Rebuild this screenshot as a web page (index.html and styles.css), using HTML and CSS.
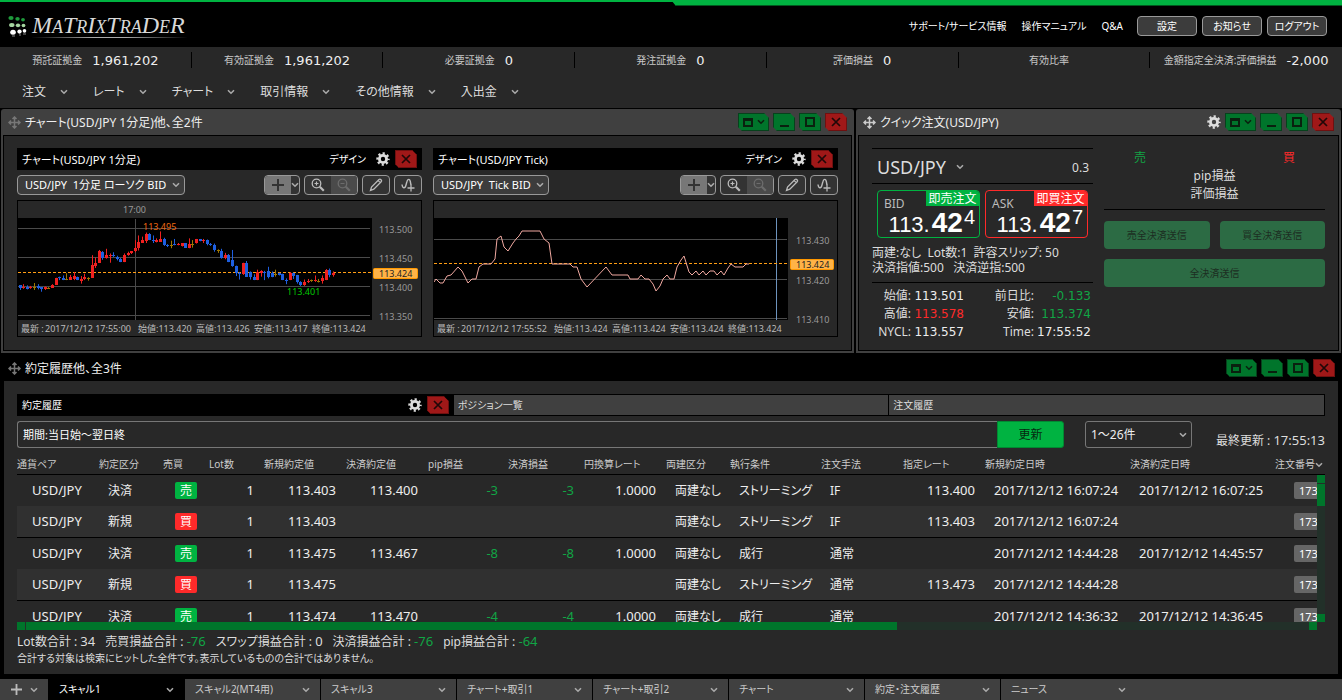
FILE: index.html
```html
<!DOCTYPE html>
<html lang="ja">
<head>
    <meta charset="UTF-8">
    <meta name="viewport" content="width=device-width, initial-scale=1.0">
    <title>MATRIX TRADER</title>
    <link rel="stylesheet" href="styles.css">
</head>
<body>
    <!-- icons -->
    <svg class="sprite" aria-hidden="true">
        <symbol id="i-chev" viewBox="0 0 8 6"><path d="M1 1.2l3 3 3-3" fill="none" stroke="currentColor" stroke-width="1.6"/></symbol>
        <symbol id="i-gear" viewBox="0 0 14 14"><circle cx="7" cy="7" r="3.6" fill="none" stroke="currentColor" stroke-width="2.8"/><circle cx="7" cy="7" r="5.6" fill="none" stroke="currentColor" stroke-width="2.2" stroke-dasharray="2.2 2.2" stroke-dashoffset="1.1"/></symbol>
        <symbol id="i-move" viewBox="0 0 13 13"><path d="M6.5 1v11M1 6.5h11M4.5 3l2-2 2 2M4.5 10l2 2 2-2M3 4.500l-2 2 2 2M10 4.500l2 2-2 2" fill="none" stroke="currentColor" stroke-width="1.5"/></symbol>
        <symbol id="i-close" viewBox="0 0 12 12"><path d="M2 2l8 8M10 2l-8 8" fill="none" stroke="currentColor" stroke-width="1.7"/></symbol>
        <symbol id="i-min" viewBox="0 0 12 12"><path d="M2 10h9" fill="none" stroke="currentColor" stroke-width="2"/></symbol>
        <symbol id="i-max" viewBox="0 0 12 12"><rect x="2" y="2" width="8" height="8" fill="none" stroke="currentColor" stroke-width="2"/></symbol>
        <symbol id="i-win" viewBox="0 0 12 12"><path d="M2 3h8v7H2zM2 4h8" fill="none" stroke="currentColor" stroke-width="2"/></symbol>
        <symbol id="i-plus" viewBox="0 0 12 12"><path d="M6 0v12M0 6h12" fill="none" stroke="currentColor" stroke-width="2"/></symbol>
        <symbol id="i-zoomin" viewBox="0 0 14 14"><circle cx="5.500" cy="5.500" r="4.300" fill="none" stroke="currentColor" stroke-width="1.300"/><path d="M3.500 5.500h4M5.500 3.500v4" stroke="currentColor" stroke-width="1.200"/><path d="M8.800 8.800l4 4" stroke="currentColor" stroke-width="2.200"/></symbol>
        <symbol id="i-zoomout" viewBox="0 0 14 14"><circle cx="5.500" cy="5.500" r="4.300" fill="none" stroke="currentColor" stroke-width="1.300"/><path d="M3.500 5.500h4" stroke="currentColor" stroke-width="1.200"/><path d="M8.800 8.800l4 4" stroke="currentColor" stroke-width="2.200"/></symbol>
        <symbol id="i-pen" viewBox="0 0 14 14"><path d="M1.500 12.500l1-3.500 7.500-7.500q1-.8 2 .2t.2 2L4.800 11.200zM9.200 2.600l2.300 2.300" fill="none" stroke="currentColor" stroke-width="1.300"/></symbol>
        <symbol id="i-wave" viewBox="0 0 14 14"><path d="M1 6.500c.5 4 3 4.500 4 .5l.8-3c.8-3.500 3-3.500 3.600 0l.6 3" fill="none" stroke="currentColor" stroke-width="1.400"/><path d="M10 6.500v7M6.500 10h7" stroke="currentColor" stroke-width="1.300"/></symbol>
    </svg>

    <header class="header">
        <div class="logo">
            <svg class="logo-mark" viewBox="0 0 20 22">
                <g fill="#1f9a3c"><ellipse cx="3" cy="3" rx="2.600" ry="2"/><ellipse cx="9.500" cy="3.800" rx="2.200" ry="1.900"/><ellipse cx="15" cy="4.800" rx="1.900" ry="1.700"/></g>
                <g fill="#a5d6a0"><ellipse cx="3.800" cy="10" rx="2.700" ry="2.100"/><ellipse cx="10" cy="10.300" rx="2.200" ry="1.900"/><ellipse cx="15.500" cy="10.500" rx="1.900" ry="1.800"/></g>
                <g fill="#fff"><ellipse cx="5" cy="17.300" rx="2.800" ry="2.500"/><ellipse cx="11.500" cy="16.600" rx="2.200" ry="2.100"/><ellipse cx="16.500" cy="15.800" rx="1.800" ry="1.900"/></g>
                <path d="M4 21h3M11 20h2M15 19h3" stroke="#888"/>
            </svg>
            <span class="logo-text"><b>M</b>A<b>T</b>R<b>I</b>X<b>T</b>RA<b>D</b>E<b>R</b></span>
        </div>
        <nav class="header-nav">
            <a href="#">サポート/サービス情報</a>
            <a href="#">操作マニュアル</a>
            <a href="#">Q&amp;A</a>
        </nav>
        <div class="header-buttons">
            <button>設定</button>
            <button>お知らせ</button>
            <button>ログアウト</button>
        </div>
    </header>

    <div class="stats">
        <div class="stat">預託証拠金<span>1,961,202</span></div>
        <div class="stat">有効証拠金<span>1,961,202</span></div>
        <div class="stat">必要証拠金<span>0</span></div>
        <div class="stat">発注証拠金<span>0</span></div>
        <div class="stat">評価損益<span>0</span></div>
        <div class="stat">有効比率<span></span></div>
        <div class="stat">金額指定全決済:評価損益<span>-2,000</span></div>
    </div>

    <nav class="menu">
        <a href="#">注文<svg class="chev"><use href="#i-chev"/></svg></a>
        <a href="#">レート<svg class="chev"><use href="#i-chev"/></svg></a>
        <a href="#">チャート<svg class="chev"><use href="#i-chev"/></svg></a>
        <a href="#">取引情報<svg class="chev"><use href="#i-chev"/></svg></a>
        <a href="#">その他情報<svg class="chev"><use href="#i-chev"/></svg></a>
        <a href="#">入出金<svg class="chev"><use href="#i-chev"/></svg></a>
    </nav>

    <main class="workspace">
        <div class="top-row">
            <section class="panel">
                <div class="panel-title">
                    <svg class="move dim"><use href="#i-move"/></svg>
                    <h2>チャート(USD/JPY 1分足)他、全2件</h2>
                    <div class="win-buttons">
                        <button class="win wide" aria-label="レイアウト"><svg><use href="#i-win"/></svg><svg class="chev"><use href="#i-chev"/></svg></button>
                        <button class="win" aria-label="最小化"><svg><use href="#i-min"/></svg></button>
                        <button class="win" aria-label="最大化"><svg><use href="#i-max"/></svg></button>
                        <button class="win close" aria-label="閉じる"><svg><use href="#i-close"/></svg></button>
                    </div>
                </div>
                <div class="panel-body charts">
                    <div class="chart">
                        <div class="chart-title">
                            <h3>チャート(USD/JPY 1分足)</h3>
                            <span>デザイン</span>
                            <svg class="gear"><use href="#i-gear"/></svg>
                            <button class="win close" aria-label="閉じる"><svg><use href="#i-close"/></svg></button>
                        </div>
                        <div class="chart-tools">
                            <select class="select-sm" aria-label="チャート種別"><option>USD/JPY&nbsp; 1分足 ローソク BID</option></select>
                            <div class="tool-group">
                                <button class="add" aria-label="追加"><svg><use href="#i-plus"/></svg></button>
                                <button class="drop" aria-label="追加メニュー"><svg class="chev"><use href="#i-chev"/></svg></button>
                            </div>
                            <div class="tool-group">
                                <button aria-label="拡大"><svg><use href="#i-zoomin"/></svg></button>
                                <button aria-label="縮小" disabled><svg><use href="#i-zoomout"/></svg></button>
                            </div>
                            <div class="tool-group"><button aria-label="描画"><svg><use href="#i-pen"/></svg></button></div>
                            <div class="tool-group"><button aria-label="テクニカル"><svg><use href="#i-wave"/></svg></button></div>
                        </div>
                        <div class="chart-box">
                            <svg viewBox="0 0 403 135">
                                <rect x="0" y="17" width="354" height="102" fill="#000"/>
                                <path class="grid" d="M0 27.500h352M0 56.500h352M0 85.500h352M0 114.500h352M117.500 18v101"/>
                                <path class="now" d="M0 71.500h355"/>
                                <g id="candles"></g>
                                <text x="105" y="12">17:00</text>
                                <text class="high" x="125" y="29">113.495</text>
                                <text class="low" x="269" y="94">113.401</text>
                                <text x="361" y="32">113.500</text>
                                <text x="361" y="61">113.450</text>
                                <text x="361" y="90">113.400</text>
                                <text x="361" y="119">113.350</text>
                                <rect class="tag" x="355.500" y="67.500" width="44" height="10" rx="1"/>
                                <text class="tag-text" x="361" y="76">113.424</text>
                                <g class="legend">
                                    <text x="3" y="131">最新 :</text>
                                    <text x="27" y="131">2017/12/12 17:55:00</text>
                                    <text x="120" y="131">始値:113.420</text>
                                    <text x="178" y="131">高値:113.426</text>
                                    <text x="236" y="131">安値:113.417</text>
                                    <text x="294" y="131">終値:113.424</text>
                                </g>
                            </svg>
                        </div>
                    </div>

                    <div class="chart">
                        <div class="chart-title">
                            <h3>チャート(USD/JPY Tick)</h3>
                            <span>デザイン</span>
                            <svg class="gear"><use href="#i-gear"/></svg>
                            <button class="win close" aria-label="閉じる"><svg><use href="#i-close"/></svg></button>
                        </div>
                        <div class="chart-tools">
                            <select class="select-sm" aria-label="チャート種別"><option>USD/JPY&nbsp; Tick BID</option></select>
                            <div class="tool-group">
                                <button class="add" aria-label="追加"><svg><use href="#i-plus"/></svg></button>
                                <button class="drop" aria-label="追加メニュー"><svg class="chev"><use href="#i-chev"/></svg></button>
                            </div>
                            <div class="tool-group">
                                <button aria-label="拡大"><svg><use href="#i-zoomin"/></svg></button>
                                <button aria-label="縮小" disabled><svg><use href="#i-zoomout"/></svg></button>
                            </div>
                            <div class="tool-group"><button aria-label="描画"><svg><use href="#i-pen"/></svg></button></div>
                            <div class="tool-group"><button aria-label="テクニカル"><svg><use href="#i-wave"/></svg></button></div>
                        </div>
                        <div class="chart-box">
                            <svg viewBox="0 0 403 135">
                                <rect x="0" y="17" width="354" height="102" fill="#000"/>
                                <path class="grid" d="M0 38.500h353M0 78.500h353M0 117.500h353"/>
                                <path class="cursor" d="M342.500 17v102"/>
                                <path class="now" d="M0 62.500h355"/>
                                <polyline class="tick" points="0,81 2,78 6,82 9,82 13,75 17,74 24,66 28,70 34,82 38,78 42,78 45,66 49,63 57,63 61,58 63,38 67,35 70,46 74,50 79,42 82,38 85,35 88,30 106,30 110,38 115,42 118,63 136,63 139,66 143,66 147,78 150,82 153,86 172,66 178,74 194,74 196,78 204,78 207,74 211,78 215,78 219,83 222,90 226,85 229,78 233,74 236,78 240,78 243,66 247,59 250,55 255,71 258,74 262,70 265,74 269,70 272,74 276,70 280,70 283,74 287,70 290,74 294,67 297,63 301,66 309,66 312,63 315,63"/>
                                <text x="362" y="43">113.430</text>
                                <text x="362" y="83">113.420</text>
                                <text x="362" y="122">113.410</text>
                                <rect class="tag" x="356.500" y="58.500" width="43" height="10" rx="1"/>
                                <text class="tag-text" x="362" y="67">113.424</text>
                                <g class="legend">
                                    <text x="3" y="131">最新 :</text>
                                    <text x="27" y="131">2017/12/12 17:55:52</text>
                                    <text x="120" y="131">始値:113.424</text>
                                    <text x="178" y="131">高値:113.424</text>
                                    <text x="236" y="131">安値:113.424</text>
                                    <text x="294" y="131">終値:113.424</text>
                                </g>
                            </svg>
                        </div>
                    </div>
                </div>
            </section>

            <section class="panel">
                <div class="panel-title">
                    <svg class="move"><use href="#i-move"/></svg>
                    <h2>クイック注文(USD/JPY)</h2>
                    <div class="win-buttons">
                        <svg class="gear"><use href="#i-gear"/></svg>
                        <button class="win wide" aria-label="レイアウト"><svg><use href="#i-win"/></svg><svg class="chev"><use href="#i-chev"/></svg></button>
                        <button class="win" aria-label="最小化"><svg><use href="#i-min"/></svg></button>
                        <button class="win" aria-label="最大化"><svg><use href="#i-max"/></svg></button>
                        <button class="win close" aria-label="閉じる"><svg><use href="#i-close"/></svg></button>
                    </div>
                </div>
                <div class="panel-body quick">
                    <div class="quick-left">
                        <div class="pair">
                            <button class="pair-name">USD/JPY<svg class="chev"><use href="#i-chev"/></svg></button>
                            <span>0.3</span>
                        </div>
                        <div class="prices">
                            <button class="price bid">
                                <span class="side">BID</span><span class="now-order">即売注文</span>
                                <span class="rate">113.<b>42</b><sup>4</sup></span>
                            </button>
                            <button class="price ask">
                                <span class="side">ASK</span><span class="now-order">即買注文</span>
                                <span class="rate">113.<b>42</b><sup>7</sup></span>
                            </button>
                        </div>
                        <p class="settings">両建:なし&nbsp; Lot数:1&nbsp; 許容スリップ: 50<br>決済指値:500 &nbsp; 決済逆指:500</p>
                        <dl class="ohlc">
                            <dt>始値:</dt><dd>113.501</dd><dt>前日比:</dt><dd class="green">-0.133</dd>
                            <dt>高値:</dt><dd class="red">113.578</dd><dt>安値:</dt><dd class="green">113.374</dd>
                            <dt>NYCL:</dt><dd>113.557</dd><dt>Time:</dt><dd>17:55:52</dd>
                        </dl>
                    </div>
                    <div class="quick-right">
                        <div class="pl">
                            <div class="pl-head"><span class="green">売</span><span class="red">買</span></div>
                            <p>pip損益</p>
                            <p>評価損益</p>
                        </div>
                        <div class="settle">
                            <button disabled>売全決済送信</button>
                            <button disabled>買全決済送信</button>
                            <button class="all" disabled>全決済送信</button>
                        </div>
                    </div>
                </div>
            </section>
        </div>

        <section class="panel history">
            <div class="panel-title">
                <svg class="move dim"><use href="#i-move"/></svg>
                <h2>約定履歴他、全3件</h2>
                <div class="win-buttons">
                    <button class="win wide" aria-label="レイアウト"><svg><use href="#i-win"/></svg><svg class="chev"><use href="#i-chev"/></svg></button>
                    <button class="win" aria-label="最小化"><svg><use href="#i-min"/></svg></button>
                    <button class="win" aria-label="最大化"><svg><use href="#i-max"/></svg></button>
                    <button class="win close" aria-label="閉じる"><svg><use href="#i-close"/></svg></button>
                </div>
            </div>
            <div class="panel-body">
                <div class="subtabs">
                    <div class="subtab active"><a href="#">約定履歴</a><svg class="gear"><use href="#i-gear"/></svg><button class="win close" aria-label="閉じる"><svg><use href="#i-close"/></svg></button></div>
                    <div class="subtab"><a href="#">ポジション一覧</a></div>
                    <div class="subtab"><a href="#">注文履歴</a></div>
                </div>
                <div class="filter">
                    <div class="search">
                        <input type="text" value="期間:当日始～翌日終" aria-label="検索条件">
                        <button>更新</button>
                    </div>
                    <select class="range" aria-label="表示件数"><option>1～26件</option></select>
                    <span class="updated">最終更新 : <span>17:55:13</span></span>
                </div>
                <div class="table-area">
                    <table>
                        <colgroup>
                            <col class="w82"><col class="w64"><col class="w46"><col class="w55"><col class="w82"><col class="w82"><col class="w80"><col class="w76">
                            <col class="w82"><col class="w64"><col class="w91"><col class="w82"><col class="w82"><col class="w145"><col class="w145"><col class="w80">
                        </colgroup>
                        <thead>
                            <tr>
                                <th>通貨ペア</th><th>約定区分</th><th>売買</th><th>Lot数</th><th>新規約定値</th><th>決済約定値</th><th>pip損益</th><th>決済損益</th>
                                <th>円換算レート</th><th>両建区分</th><th>執行条件</th><th>注文手法</th><th>指定レート</th><th>新規約定日時</th><th>決済約定日時</th><th>注文番号<svg class="chev"><use href="#i-chev"/></svg></th>
                            </tr>
                        </thead>
                        <tbody>
                            <tr>
                                <td class="sym">USD/JPY</td><td>決済</td><td><span class="badge sell">売</span></td><td class="num">1</td><td class="num">113.403</td><td class="num">113.400</td><td class="num green">-3</td><td class="num green">-3</td>
                                <td class="num">1.0000</td><td>両建なし</td><td>ストリーミング</td><td>IF</td><td class="num">113.400</td><td class="date">2017/12/12 16:07:24</td><td class="date">2017/12/12 16:07:25</td><td><button class="order-no">1734</button></td>
                            </tr>
                            <tr>
                                <td class="sym">USD/JPY</td><td>新規</td><td><span class="badge buy">買</span></td><td class="num">1</td><td class="num">113.403</td><td></td><td></td><td></td>
                                <td></td><td>両建なし</td><td>ストリーミング</td><td>IF</td><td class="num">113.403</td><td class="date">2017/12/12 16:07:24</td><td></td><td><button class="order-no">1734</button></td>
                            </tr>
                            <tr>
                                <td class="sym">USD/JPY</td><td>決済</td><td><span class="badge sell">売</span></td><td class="num">1</td><td class="num">113.475</td><td class="num">113.467</td><td class="num green">-8</td><td class="num green">-8</td>
                                <td class="num">1.0000</td><td>両建なし</td><td>成行</td><td>通常</td><td></td><td class="date">2017/12/12 14:44:28</td><td class="date">2017/12/12 14:45:57</td><td><button class="order-no">1734</button></td>
                            </tr>
                            <tr>
                                <td class="sym">USD/JPY</td><td>新規</td><td><span class="badge buy">買</span></td><td class="num">1</td><td class="num">113.475</td><td></td><td></td><td></td>
                                <td></td><td>両建なし</td><td>ストリーミング</td><td>通常</td><td class="num">113.473</td><td class="date">2017/12/12 14:44:28</td><td></td><td><button class="order-no">1734</button></td>
                            </tr>
                            <tr>
                                <td class="sym">USD/JPY</td><td>決済</td><td><span class="badge sell">売</span></td><td class="num">1</td><td class="num">113.474</td><td class="num">113.470</td><td class="num green">-4</td><td class="num green">-4</td>
                                <td class="num">1.0000</td><td>両建なし</td><td>成行</td><td>通常</td><td></td><td class="date">2017/12/12 14:36:32</td><td class="date">2017/12/12 14:36:45</td><td><button class="order-no">1734</button></td>
                            </tr>
                        </tbody>
                    </table>
                    <div class="vscroll"><i></i><i class="thumb"></i><i class="end"></i></div>
                </div>
                <div class="hscroll"><i></i><i class="thumb"></i><i class="end"></i></div>
                <p class="totals">
                    <span>Lot数合計 : <b>34</b></span><span>売買損益合計 : <b class="green">-76</b></span><span>スワップ損益合計 : <b>0</b></span><span>決済損益合計 : <b class="green">-76</b></span><span>pip損益合計 : <b class="green">-64</b></span>
                </p>
                <p class="note">合計する対象は検索にヒットした全件です。表示しているものの合計ではありません。</p>
            </div>
        </section>
    </main>

    <footer class="pages">
        <button class="add-page" aria-label="ページ追加"><svg><use href="#i-plus"/></svg><svg class="chev"><use href="#i-chev"/></svg></button>
        <button class="page active">スキャル1<svg class="chev"><use href="#i-chev"/></svg></button>
        <button class="page">スキャル2(MT4用)<svg class="chev"><use href="#i-chev"/></svg></button>
        <button class="page">スキャル3<svg class="chev"><use href="#i-chev"/></svg></button>
        <button class="page">チャート+取引1<svg class="chev"><use href="#i-chev"/></svg></button>
        <button class="page">チャート+取引2<svg class="chev"><use href="#i-chev"/></svg></button>
        <button class="page">チャート<svg class="chev"><use href="#i-chev"/></svg></button>
        <button class="page">約定・注文履歴<svg class="chev"><use href="#i-chev"/></svg></button>
        <button class="page">ニュース<svg class="chev"><use href="#i-chev"/></svg></button>
    </footer>

    <script src="chart.js"></script>
</body>
</html>
```
FILE: styles.css
```css
* {
    box-sizing: border-box;
}
body {
    margin: 0;
    height: 100vh;
    display: flex;
    flex-direction: column;
    overflow: hidden;
    background: #000;
    color: #ddd;
    font-family: "Noto Sans", "Noto Sans CJK JP", sans-serif;
    font-size: 12px;
    line-height: 15px;
    font-feature-settings: "palt";
}
button, input, select {
    font: inherit;
    font-feature-settings: inherit;
    color: inherit;
    margin: 0;
    padding: 0;
    border: none;
    background: none;
    cursor: pointer;
}
a {
    color: inherit;
    text-decoration: none;
}
h2, h3, p, dl, dd {
    margin: 0;
    font-weight: normal;
}
.sprite {
    display: none;
}
.chev {
    width: 8px;
    height: 6px;
    color: #aaa;
    flex: none;
}
.gear {
    width: 14px;
    height: 14px;
    color: #ddd;
    flex: none;
}
.green {
    color: #11a545;
}
.red {
    color: #ff2a2a;
}

/* header */
.header {
    position: relative;
    flex: none;
    height: 47px;
    padding: 5px 15px 0 8px;
    display: flex;
    align-items: center;
    font-size: 10px;
    color: #fff;
}
.header::before,
.header::after {
    content: "";
    position: absolute;
    top: 0;
    left: 0;
    right: 0;
    height: 2px;
    background: #00b341;
}
.header::after {
    left: 50%;
    height: 5px;
    border-bottom: 1px solid #005a20;
    clip-path: polygon(0 0, 100% 0, 100% 100%, 5px 100%);
}
.logo {
    display: flex;
    align-items: center;
    gap: 4px;
    margin-right: auto;
}
.logo-mark {
    width: 20px;
    height: 22px;
}
.logo-text {
    height: 23px;
    padding-right: 2px;
    font: italic 18px/20px "Liberation Serif", serif;
    color: #d8d8d8;
    border-bottom: 1px solid;
    border-image: linear-gradient(90deg, #000, #aaa 40%, #aaa 60%, #000) 1;
}
.logo-text b {
    font-size: 24px;
    font-weight: normal;
}
.header-nav {
    display: flex;
    gap: 15px;
    margin-right: 14px;
}
.header-buttons {
    display: flex;
    gap: 5px;
}
.header-buttons button {
    width: 60px;
    height: 20px;
    border: 1px solid #999;
    border-radius: 4px;
    background: #3c3c3c;
}

/* account summary */
.stats {
    flex: none;
    display: grid;
    grid-template-columns: repeat(7, 1fr);
    height: 28px;
    padding-top: 5px;
    background: #282828;
}
.stat {
    display: flex;
    justify-content: center;
    align-items: center;
    gap: 10px;
    height: 16px;
    font-size: 10px;
    white-space: nowrap;
    color: #c8c8c8;
    border-right: 1px solid #000;
}
.stat:last-child {
    border-right: none;
}
.stat span {
    font-family: "DejaVu Sans", sans-serif;
    font-size: 13px;
    color: #eee;
}

.menu {
    flex: none;
    display: flex;
    gap: 25px;
    height: 33px;
    padding-left: 22px;
    background: #282828;
}
.menu a {
    display: flex;
    align-items: center;
    gap: 14px;
}

/* panels */
.workspace {
    flex: 1;
    min-height: 0;
    display: flex;
    flex-direction: column;
    gap: 2px;
    padding-top: 1px;
}
.top-row {
    display: grid;
    grid-template-columns: 853fr 485fr;
    gap: 2px;
    padding: 0 1px;
}
.panel {
    display: flex;
    flex-direction: column;
    min-width: 0;
    padding: 0 2px 2px;
    background: #404040;
    border-radius: 3px 3px 0 0;
}
.panel-title {
    flex: none;
    display: flex;
    align-items: center;
    gap: 4px;
    height: 26px;
    padding: 0 5px;
}
.panel-title h2 {
    font-size: 12px;
    color: #eee;
}
.move {
    width: 13px;
    height: 13px;
    color: #ccc;
}
.move.dim {
    color: #777;
}
.win-buttons {
    display: flex;
    align-items: center;
    gap: 4px;
    margin-left: auto;
}
.win {
    flex: none;
    display: flex;
    align-items: center;
    justify-content: center;
    gap: 3px;
    width: 22px;
    height: 18px;
    background: #00752b;
    color: #0a200f;
    border: 1px solid #06421c;
    clip-path: polygon(0 0, 17px 0, 100% 5px, 100% 100%, 4px 100%, 0 14px);
}
.win.wide {
    width: 31px;
    clip-path: polygon(0 0, 26px 0, 100% 5px, 100% 100%, 4px 100%, 0 14px);
}
.win.close {
    background: #a01818;
    border-color: #701010;
    color: #200808;
}
.win svg {
    width: 12px;
    height: 12px;
    flex: none;
}
.win svg.chev {
    width: 8px;
    height: 6px;
    color: inherit;
}
.panel-body {
    flex: 1;
    min-height: 0;
    padding: 12px 13px 13px;
    background: #282828;
    border: 1px solid #000;
}

/* charts */
.charts {
    display: grid;
    grid-template-columns: 1fr 1fr;
    gap: 11px;
}
.chart {
    display: flex;
    flex-direction: column;
    gap: 5px;
    min-width: 0;
}
.chart-title {
    display: flex;
    align-items: center;
    height: 22px;
    padding: 0 5px;
    background: #000;
    color: #fff;
}
.chart-title h3 {
    font-size: 11px;
    margin-right: auto;
}
.chart-title .gear {
    margin: 0 5px 0 10px;
}
.chart-title span {
    font-size: 10px;
}
.chart-tools {
    display: flex;
    gap: 4px;
    height: 20px;
}
.select-sm,
.range {
    appearance: none;
    border: 1px solid #999;
    border-radius: 4px;
    background: #3c3c3c url("data:image/svg+xml,%3Csvg xmlns='http://www.w3.org/2000/svg' viewBox='0 0 8 6'%3E%3Cpath d='M1 1.2l3 3 3-3' fill='none' stroke='%23aaa' stroke-width='1.6'/%3E%3C/svg%3E") no-repeat right 4px center / 8px 6px;
}
.select-sm {
    margin-right: auto;
    padding: 0 17px 0 7px;
    font-size: 11px;
    line-height: 18px;
    color: #fff;
}
.tool-group {
    display: flex;
    border: 1px solid #999;
    border-radius: 4px;
    background: #333;
    overflow: hidden;
}
.tool-group button {
    display: flex;
    align-items: center;
    justify-content: center;
    width: 26px;
    color: #bbb;
}
.tool-group button:disabled {
    background: #4a4a4a;
    color: #6c6c6c;
}
.tool-group .add {
    background: #777;
    color: #333;
}
.tool-group .drop {
    width: 8px;
}
.tool-group svg {
    width: 14px;
    height: 14px;
    flex: none;
}
.tool-group .add svg {
    width: 12px;
    height: 12px;
}
.tool-group svg.chev {
    width: 8px;
    height: 6px;
}
.chart-box {
    border: 1px solid #000;
}
.chart-box svg {
    display: block;
    width: 100%;
}
.chart-box text {
    font-size: 9px;
    fill: #999;
}
.chart-box .legend text {
    fill: #bbb;
}
.chart-box .high {
    fill: #f06a10;
}
.chart-box .low {
    fill: #00c800;
}
.chart-box .tag {
    fill: #ffb347;
    stroke: #ff9800;
}
.chart-box .tag-text {
    fill: #222;
}
.grid {
    stroke: #4a4a4a;
}
.now {
    stroke: #ff9d14;
    stroke-dasharray: 3 2;
}
.cursor {
    stroke: #6d93bd;
}
.tick {
    fill: none;
    stroke: #f0a8a0;
}
.candle-up {
    stroke: #f02020;
    fill: #f02020;
}
.candle-down {
    stroke: #1e5fe0;
    fill: #1e5fe0;
}
.candle-flat {
    stroke: #a07800;
    fill: #a07800;
}

/* quick order */
.quick {
    display: grid;
    grid-template-columns: minmax(0, 1fr) minmax(0, 1fr);
    gap: 11px;
    padding-bottom: 9px;
}
.pair {
    display: flex;
    align-items: center;
    justify-content: space-between;
    height: 36px;
    padding: 2px 4px 0 5px;
    border-top: 1px solid #000;
    border-bottom: 1px solid #000;
}
.pair-name {
    display: flex;
    align-items: center;
    gap: 10px;
    font-size: 18px;
}
.prices {
    display: grid;
    grid-template-columns: 1fr 1fr;
    gap: 5px;
    padding: 6px 5px 7px;
}
.price {
    display: grid;
    grid-template-columns: 1fr 53px;
    grid-template-rows: 15px 31px;
    height: 48px;
    border: 1px solid #00b341;
    border-radius: 4px;
    overflow: hidden;
    color: #fff;
}
.price.ask {
    border-color: #ff2a2a;
}
.side {
    padding: 5px 0 0 6px;
    text-align: left;
    color: #bbb;
}
.now-order {
    background: #00b341;
}
.ask .now-order {
    background: #ff2a2a;
}
.rate {
    grid-column: 1 / 3;
    padding-right: 4px;
    text-align: right;
    white-space: nowrap;
    font: 22px/34px "Liberation Sans", sans-serif;
}
.rate b {
    font-size: 28px;
    margin-left: 2px;
}
.rate sup {
    font-size: 20px;
    line-height: 10px;
    vertical-align: 8px;
    margin-left: 1px;
}
.settings {
    padding-bottom: 7px;
    border-bottom: 1px solid #000;
    white-space: nowrap;
}
.ohlc {
    display: grid;
    grid-template-columns: 39px 50px 67px 1fr;
    column-gap: 3px;
    padding: 4px 5px 0 0;
    line-height: 18px;
    text-align: right;
}
.ohlc dd {
    font-family: "DejaVu Sans", sans-serif;
}
.ohlc dd:not(.green):not(.red) {
    color: #eee;
}
.pl {
    height: 62px;
    padding-top: 1px;
    line-height: 18px;
    text-align: center;
    border-bottom: 1px solid #000;
}
.pl-head {
    display: flex;
    justify-content: space-between;
    padding: 0 30px;
}
.settle {
    display: grid;
    grid-template-columns: 1fr 1fr;
    gap: 10px;
    padding-top: 11px;
}
.settle button {
    height: 28px;
    border-radius: 4px;
    background: #2c6b44;
    color: #1c2e22;
    font-size: 10px;
}
.settle .all {
    grid-column: 1 / 3;
}

/* trade history */
.history {
    flex: 1;
    min-height: 0;
    background: #000;
    padding: 0 4px;
}
.history .panel-title {
    padding: 0 3px 0 4px;
}
.history .panel-body {
    display: flex;
    flex-direction: column;
    border: none;
    padding: 13px 13px 8px;
}
.subtabs {
    flex: none;
    display: grid;
    grid-template-columns: repeat(3, 1fr);
    height: 22px;
    border: solid #000;
    border-width: 1px 1px 1px 0;
    font-size: 10px;
}
.subtab {
    display: flex;
    align-items: center;
    gap: 5px;
    padding: 0 4px;
    background: #404040;
    border-left: 1px solid #000;
}
.subtab a {
    margin-right: auto;
}
.subtab.active {
    background: #000;
    color: #fff;
}
.filter {
    flex: none;
    display: flex;
    gap: 21px;
    height: 27px;
    margin: 5px 0 7px;
}
.search {
    flex: 1;
    display: flex;
}
.search input {
    flex: 1;
    padding: 0 5px;
    border: 1px solid #777;
    border-right: none;
    border-radius: 3px 0 0 3px;
    font-size: 11px;
    color: #fff;
}
.search button {
    width: 67px;
    background: #00b341;
    border: 1px solid #008a32;
    border-radius: 0 3px 3px 0;
    color: #06280f;
}
.range {
    width: 107px;
    padding-left: 5px;
    border-color: #777;
    border-radius: 3px;
    background-color: #282828;
    color: #eee;
}
.updated {
    align-self: flex-end;
    min-width: 112px;
    text-align: right;
    white-space: nowrap;
}
.updated span {
    font-size: 13px;
}
.table-area {
    position: relative;
    flex: 1;
    min-height: 0;
    overflow: hidden;
}
table {
    width: 1338px;
    table-layout: fixed;
    border-collapse: separate;
    border-spacing: 0;
}
.w46 { width: 46px; }
.w55 { width: 55px; }
.w64 { width: 64px; }
.w76 { width: 76px; }
.w80 { width: 80px; }
.w82 { width: 82px; }
.w91 { width: 91px; }
.w145 { width: 145px; }
th {
    height: 20px;
    padding: 0;
    border-bottom: 1px solid #000;
    font-size: 10px;
    font-weight: normal;
    text-align: left;
    white-space: nowrap;
    color: #ccc;
}
td {
    height: 31px;
    padding: 0 9px;
    white-space: nowrap;
    color: #eee;
}
td.green {
    color: #11a545;
}
tbody tr:nth-child(even) td {
    height: 32px;
    background: #303030;
    border-bottom: 1px solid #000;
}
td.sym {
    padding-left: 15px;
    font-size: 13px;
}
td.num {
    padding-right: 10px;
    text-align: right;
    font-size: 13px;
}
td.date {
    font-size: 13px;
}
.badge {
    display: block;
    width: 22px;
    margin-left: 3px;
    border-radius: 2px;
    text-align: center;
    line-height: 17px;
    color: #fff;
}
.badge.sell {
    background: #00b341;
}
.badge.buy {
    background: #ff2a2a;
}
.order-no {
    display: block;
    margin-left: 10px;
    padding: 0 5px;
    border-radius: 2px;
    background: #666;
    color: #fff;
    font-size: 11px;
    line-height: 17px;
}
.vscroll {
    position: absolute;
    top: 20px;
    right: 0;
    bottom: 0;
    width: 8px;
    display: flex;
    flex-direction: column;
    gap: 1px;
    background: #223029;
}
.vscroll i,
.hscroll i {
    flex: none;
    width: 8px;
    height: 8px;
    background: #00752b;
}
.vscroll .thumb {
    height: 22px;
}
.vscroll .end {
    margin-top: auto;
}
.hscroll {
    flex: none;
    display: flex;
    gap: 1px;
    height: 8px;
    margin-right: 8px;
    background: #223029;
}
.hscroll .thumb {
    width: 67%;
}
.hscroll .end {
    margin-left: auto;
}
.totals {
    flex: none;
    display: flex;
    gap: 10px;
    padding-top: 2px;
    line-height: 18px;
}
.totals b {
    font-size: 13px;
    font-weight: normal;
}
.note {
    flex: none;
    font-size: 10px;
}

/* page tabs */
.pages {
    flex: none;
    display: flex;
    gap: 1px;
    height: 21px;
    margin-top: 5px;
    background: #404040;
    font-size: 10px;
}
.add-page {
    display: flex;
    align-items: center;
    justify-content: center;
    gap: 8px;
    width: 48px;
}
.add-page svg:first-child {
    width: 11px;
    height: 11px;
    color: #bbb;
}
.page {
    display: flex;
    align-items: center;
    justify-content: space-between;
    width: 135px;
    padding: 0 10px;
    box-shadow: -1px 0 #000;
    color: #ccc;
}
.page.active {
    background: #000;
    color: #fff;
}
```
FILE: chart.js
```js
// one minute bars from 16:28: open, high, low, close (1 = 0.001 above 113)
const bars = [
    [402,402,394,397],[397,404,396,400],[400,402,395,396],[398,401,396,400],[399,406,394,399],[401,404,395,398],[399,399,391,395],[395,400,394,399],
    [398,399,397,398],[398,404,398,403],[403,415,403,414],[416,417,411,414],[414,419,411,412],[413,423,411,413],[412,420,412,416],[413,425,411,418],
    [416,417,411,412],[410,418,405,413],[413,422,411,416],[415,416,410,415],[415,454,415,437],[436,450,432,441],[441,463,441,461],[460,461,446,449],
    [449,465,448,454],[453,457,441,455],[454,459,451,452],[451,453,445,447],[447,449,442,443],[443,457,442,455],[454,460,453,458],[457,461,456,461],
    [461,480,459,467],[467,488,462,476],[475,486,475,480],[478,493,475,490],[491,492,480,481],[480,488,475,478],[476,483,476,480],[477,495,477,482],
    [482,484,470,472],[471,473,468,469],[472,479,466,472],[474,482,471,472],[471,475,471,474],[470,475,469,475],[475,475,467,467],[466,483,466,474],
    [473,480,467,473],[475,482,474,482],[482,482,478,479],[478,482,475,481],[481,481,471,473],[473,475,470,471],[472,474,460,463],[463,464,458,463],
    [462,465,448,449],[449,458,447,455],[455,456,442,443],[445,463,434,436],[435,436,418,423],[424,425,412,421],[421,441,420,440],[440,444,417,417],
    [425,426,412,416],[417,421,411,412],[412,429,411,425],[423,428,417,426],[425,427,411,423],[426,434,414,417],[424,426,416,417],[421,429,417,421],
    [423,424,419,420],[421,422,411,411],[411,414,404,409],[411,425,411,423],[423,424,413,418],[419,420,405,407],[407,409,401,402],[402,412,401,408],
    [407,413,406,410],[411,412,408,411],[409,419,408,412],[410,413,407,410],[409,419,405,414],[412,430,411,429],[429,431,416,419],[419,426,417,424]
];

const y = v => 27.5 + (500 - v) * 0.58;

document.getElementById('candles').innerHTML = bars.map(([o, h, l, c], i) => {
    const x = Math.round(1.5 + i * 3.6);
    const type = c > o ? 'up' : c < o ? 'down' : 'flat';
    const top = Math.round(y(Math.max(o, c)));
    const height = Math.max(1, Math.round(y(Math.min(o, c))) - top);
    return `<g class="candle-${type}"><path d="M${x + 0.5} ${y(h)}V${y(l)}"/><rect x="${x - 1}" y="${top}" width="3" height="${height}" stroke="none"/></g>`;
}).join('');
```
